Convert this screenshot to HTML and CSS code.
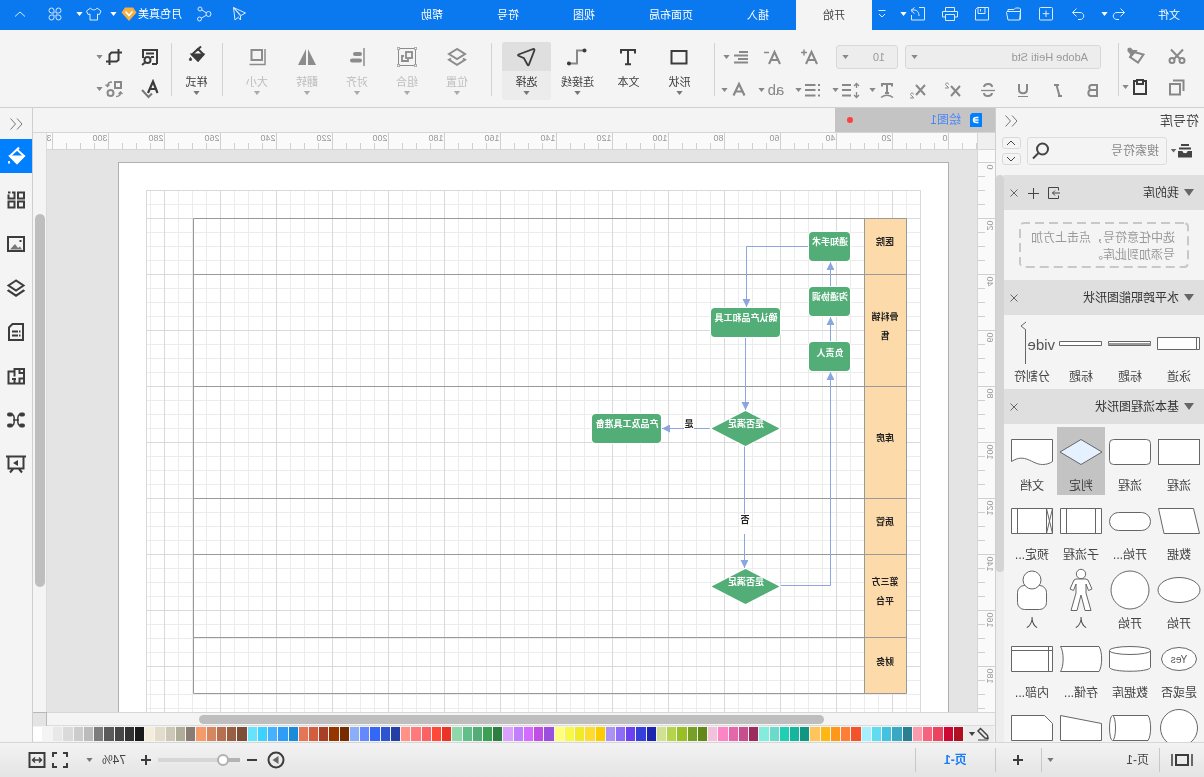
FILE: index.html
```html
<!DOCTYPE html>
<html lang="zh-CN">
<head>
<meta charset="utf-8">
<title>绘图1</title>
<link rel="stylesheet" href="styles.css">
</head>
<body>
<div class="app">
  <header class="topbar">
    <button class="file">文件</button>
    <div class="quick">
      <button class="combo" aria-label="撤销"><svg class="ic" viewBox="0 0 20 20"><path d="M8.500 4.500 4.500 8.500l4 4M4.500 8.500h7.500c5 0 5 7 0 7h-2"/></svg><i class="caret"></i></button>
      <button aria-label="重做"><svg class="ic" viewBox="0 0 20 20"><path d="M11.500 4.500l4 4-4 4M15.500 8.500H8c-5 0-5 7 0 7h2"/></svg></button>
      <button aria-label="新建"><svg class="ic" viewBox="0 0 20 20"><rect x="3.500" y="3.500" width="13" height="12.500" rx="1"/><path d="M10 6.500v6.500M6.700 9.700h6.600"/></svg></button>
      <button aria-label="打开"><svg class="ic" viewBox="0 0 20 20"><path d="M3.500 15.500V5l1-1h4l1.500 1.500h6v2M3.500 7.500h13.500l.500 1-1.500 7.500H4.500z"/></svg></button>
      <button aria-label="保存"><svg class="ic" viewBox="0 0 20 20"><path d="M3.500 3.500h11l2 2v10.500h-13zM7 3.500v6h7v-6M11.500 5v2.500"/></svg></button>
      <button aria-label="打印"><svg class="ic" viewBox="0 0 20 20"><path d="M5.500 7V3.500h9V7M5.500 13h-3V7.500h15V13h-3M5.500 10.500h9v6h-9z"/></svg></button>
      <button class="combo" aria-label="导出"><svg class="ic" viewBox="0 0 20 20"><path d="M9 3.500H3.500v12.500h13V11M17 6.500l-3.500-3M17 6.500l-3.500 3M17 6h-3c-3 0-5 2-5 6"/></svg><i class="caret"></i></button>
    </div>
    <button class="more" aria-label="更多"><svg class="ic12" viewBox="0 0 12 12"><path d="M2.500 2.500h7M3 6l3 3 3-3"/></svg></button>
    <nav class="tabs">
      <button class="tab on">开始</button>
      <button class="tab">插入</button>
      <button class="tab wide">页面布局</button>
      <button class="tab">视图</button>
      <button class="tab">符号</button>
      <button class="tab">帮助</button>
    </nav>
    <div class="account">
      <button aria-label="发送"><svg class="ic" viewBox="0 0 20 20"><path d="M15.500 3.500 3.500 9l4.500 2.500zM15.500 3.500 14 16l-3.500-3M15.500 3.500 8.500 12v4l2-2.500"/></svg></button>
      <button aria-label="分享"><svg class="ic" viewBox="0 0 20 20"><circle cx="5.500" cy="10" r="2.500"/><circle cx="14" cy="5" r="2"/><circle cx="14.500" cy="15" r="2"/><path d="M7.700 8.800 12.200 6M7.700 11.300l5 2.800"/></svg></button>
      <button class="user">月色真美<svg class="gem" viewBox="0 0 16 16"><path d="M4 1.500h8l3.500 5L8 15 .500 6.500z" fill="#f6b042"/><path d="M4.500 5.500 8 9.500l3.500-4" fill="none" stroke="#fff" stroke-width="1.500"/></svg><i class="caret"></i></button>
      <button class="combo" aria-label="主题"><svg class="ic" viewBox="0 0 20 20"><path d="M7 4 3 7l1.500 3.500L6.500 10v6h7.500v-6l2 .500L17.500 7l-4-3c-1 2.500-5.500 2.500-6.500 0z"/></svg><i class="caret"></i></button>
      <button aria-label="应用"><svg class="ic" viewBox="0 0 20 20"><path d="M9 9V6.500A2.500 2.500 0 1 0 6.500 9zM11 9V6.500A2.500 2.500 0 1 1 13.500 9zM9 11v2.500A2.500 2.500 0 1 1 6.500 11zM11 11v2.500a2.500 2.500 0 1 0 2.500-2.500z"/></svg></button>
      <button aria-label="收起"><svg class="ic" viewBox="0 0 20 20"><path d="M5 12.500 10 8l5 4.500"/></svg></button>
    </div>
  </header>

  <section class="ribbon">
    <div class="grp clip">
      <div class="row r21">
        <button aria-label="剪切"><svg class="ic g2" viewBox="0 0 20 20"><path d="M4 3.500l9 9.500M16 3.500 7 13"/><circle cx="5" cy="14.500" r="2.500"/><circle cx="15" cy="14.500" r="2.500"/></svg></button>
        <button aria-label="格式刷"><svg class="ic g2" viewBox="0 0 20 20"><path d="M2.500 8.500 8 16.500l8-5.500L12 6z"/><path d="M9 4.500 15 11l1-4 2-1.500V2.500L15.500 2 13 4.500z" fill="currentColor" stroke-width="1"/></svg></button>
      </div>
      <div class="row r17">
        <button aria-label="复制"><svg class="ic g2" viewBox="0 0 20 20"><rect x="7" y="7" width="10" height="10.500"/><path d="M3.500 14V3.500H14"/></svg></button>
        <button class="combo dark" aria-label="粘贴"><svg class="ic g2" viewBox="0 0 20 20"><path d="M7 4H4v13h12V4h-3"/><rect x="7" y="3" width="6" height="4"/></svg><i class="caret"></i></button>
      </div>
    </div>
    <i class="sep"></i>
    <div class="grp font">
      <div class="row">
        <label class="pick name"><select aria-label="字体"><option>Adobe Heiti Std</option></select><i class="caret"></i></label>
        <label class="pick size"><select aria-label="字号"><option>10</option></select><i class="caret"></i></label>
        <button class="ml16" aria-label="增大字号"><svg class="ic g2" viewBox="0 0 20 20"><path d="M3 17 8.500 5 14 17M5 13h7"/><path d="M13 5.500h6M16 2.500v6" stroke-width="1.500"/></svg></button>
        <button class="ml17" aria-label="减小字号"><svg class="ic g2" viewBox="0 0 20 20"><path d="M3 17 8.500 5 14 17M5 13h7"/><path d="M14 5.500h5" stroke-width="1.500"/></svg></button>
        <button class="combo ml12" aria-label="对齐"><svg class="ic g2" viewBox="0 0 20 20"><path d="M3 5h9M3 8.500h14M3 12h10M3 15.500h14"/></svg><i class="caret"></i></button>
      </div>
      <div class="row fmt">
        <button aria-label="粗体"><svg class="ic g2" viewBox="0 0 20 20"><path d="M6 5h5.500c3 0 3 5 0 5H6h6c3.500 0 3.500 6 0 6H6z"/></svg></button>
        <button aria-label="斜体"><svg class="ic g2" viewBox="0 0 20 20"><path d="M9 5h5M6 16h4M11.500 5 8.500 16"/></svg></button>
        <button aria-label="下划线"><svg class="ic g2" viewBox="0 0 20 20"><path d="M6 4v5.500c0 5 8 5 8 0V4"/><path d="M5 16.500h10" stroke-width="1"/></svg></button>
        <button aria-label="删除线"><svg class="ic g2" viewBox="0 0 20 20"><path d="M14 7c-.500-4-8-4-8 0M6 13c.500 4 8 4 8 0"/><path d="M3 10.500h14" stroke-width="1.300"/></svg></button>
        <button class="script" aria-label="上标"><svg class="ic g2" viewBox="0 0 20 20"><path d="M3 6l9 10M12 6 3 16"/><path d="M14.500 4.500c0-2 3-2 3 0 0 1-3 2-3 3.500h3.500" stroke-width="1"/></svg></button>
        <button class="script" aria-label="下标"><svg class="ic g2" viewBox="0 0 20 20"><path d="M3 5l9 10M12 5 3 15"/><path d="M14.500 14.500c0-2 3-2 3 0 0 1-3 2-3 3.500h3.500" stroke-width="1"/></svg></button>
        <div class="menus">
          <button class="combo" aria-label="文字方向"><svg class="ic g2" viewBox="0 0 20 20"><path d="M5 6.500V4h10v2.500M10 4v9M8 13h4"/><path d="M4 17.500c4-3 8-3 12 0" stroke-width="1.500"/></svg><i class="caret"></i></button>
          <button class="combo" aria-label="行距"><svg class="ic g2" viewBox="0 0 20 20"><path d="M9 5h9M9 10h9M9 15.500h9"/><path d="M3.500 4v4M1 6l2.500-2.500L6 6M3.500 12v5M1 15l2.500 2.500L6 15" stroke-width="1.300"/></svg><i class="caret"></i></button>
          <button class="combo" aria-label="项目符号"><svg class="ic g2" viewBox="0 0 20 20"><path d="M7.500 5H18M7.500 10H18M7.500 15.500H18M3 5h2M3 10h2M3 15.500h2"/></svg><i class="caret"></i></button>
          <button class="combo" aria-label="大小写"><span class="ab">ab</span><i class="caret"></i></button>
          <button class="combo" aria-label="字体颜色"><svg class="ic g2" viewBox="0 0 20 20"><path d="M4.500 15.500 10 4l5.500 11.500M6.500 11.500h7" stroke-width="2.200"/></svg><i class="caret"></i></button>
        </div>
      </div>
    </div>
    <i class="sep"></i>
    <div class="tools main">
      <button class="tool"><span class="pic"><svg class="ic g2" viewBox="0 0 20 20"><rect x="2.500" y="4" width="15" height="12.500"/></svg></span>形状<i class="caret"></i></button>
      <button class="tool"><span class="pic"><svg class="ic g2" viewBox="0 0 20 20"><path d="M3 6.500V3h14v3.500M10 3v14M7 17.200h6"/></svg></span>文本</button>
      <button class="tool"><span class="pic"><svg class="ic g2" viewBox="0 0 20 20"><path d="M3 3.500h7v13h6" stroke="#888"/><circle cx="2.500" cy="3.500" r="1.300" fill="currentColor" stroke-width="1.500"/><circle cx="18" cy="16.500" r="1.300" fill="currentColor" stroke-width="1.500"/></svg></span>连接线<i class="caret"></i></button>
      <button class="tool on"><span class="pic"><svg class="ic g2" viewBox="0 0 20 20"><path d="M1.500 3c0-.500.500-1 1-1l15 5.500c.700.400.700.800 0 1.300l-5.500 2.500-3.500 6.500c-.500.800-1 .600-1.300 0z" stroke-width="1.800"/></svg></span>选择<i class="caret"></i></button>
    </div>
    <i class="sep"></i>
    <div class="tools off">
      <button class="tool" disabled><span class="pic"><svg class="ic g2" viewBox="0 0 20 20"><path d="M10 2l8 5-8 5-8-5z"/><path d="M4 11.500l-2 1.300 8 5 8-5-2-1.300"/></svg></span>位置<i class="caret"></i></button>
      <button class="tool" disabled><span class="pic"><svg class="ic" viewBox="0 0 20 20"><rect x="1.500" y="1.500" width="17" height="17"/><circle cx="1.500" cy="1.500" r="1.300" fill="#f4f4f4"/><circle cx="18.500" cy="1.500" r="1.300" fill="#f4f4f4"/><circle cx="1.500" cy="18.500" r="1.300" fill="#f4f4f4"/><circle cx="18.500" cy="18.500" r="1.300" fill="#f4f4f4"/><rect x="5" y="5" width="6" height="6" stroke-width="1.800"/><path d="M13 9h2v5H9v-2" stroke-width="1.800"/></svg></span>组合<i class="caret"></i></button>
      <button class="tool" disabled><span class="pic"><svg class="ic g2" viewBox="0 0 20 20"><path d="M3 1v18" stroke-width="1.500"/><path d="M7 7h5M7 13.500h8" stroke-width="4" stroke-linecap="round"/></svg></span>对齐<i class="caret"></i></button>
      <button class="tool" disabled><span class="pic"><svg class="ic fill" viewBox="0 0 20 20"><path d="M9 2v16H1zM11 2v16h8z"/></svg></span>翻转<i class="caret"></i></button>
      <button class="tool" disabled><span class="pic"><svg class="ic g2" viewBox="0 0 20 20"><rect x="5" y="3" width="10.500" height="10"/><path d="M2 2v15.500h15.500" stroke-width="1.500"/></svg></span>大小<i class="caret"></i></button>
    </div>
    <i class="sep"></i>
    <div class="tools style">
      <button class="tool"><span class="pic up"><svg class="ic g2" viewBox="0 0 20 20"><path d="M8 5l6 5.500-6 6-5.500-6z"/><path d="M3 10.500h11l-6 6z" fill="currentColor"/><path d="M5 2.500 9.500 6.500"/><path d="M15.500 13.500c1.500 2 1.500 3 0 3s-1.500-1 0-3z" fill="currentColor" stroke-width="1"/></svg></span>样式<i class="caret"></i></button>
    </div>
    <i class="sep"></i>
    <div class="grp edit">
      <div class="row r16 dark">
        <button aria-label="查找"><svg class="ic g2" viewBox="0 0 20 20"><path d="M3 17V3h14v8M6 6.500h8M6 10h3M3 17h5"/><circle cx="12.500" cy="13" r="3"/><path d="M15 15.500l3 2.500"/></svg></button>
        <button class="combo" aria-label="裁剪"><svg class="ic g2" viewBox="0 0 20 20"><path d="M5.500 2v3M2 5.500h10.500l2 2V18M5.500 5.500V13l2 1.500H18"/></svg><i class="caret"></i></button>
      </div>
      <div class="row r16 dark">
        <button aria-label="拼写检查"><svg class="ic g2" viewBox="0 0 20 20"><path d="M2.500 14 7 2.500 12 14M4 10h6" stroke-width="2.200"/><path d="M8 14.500l3.500 3.500 6.500-7" stroke="#777"/></svg></button>
        <button class="combo grey" aria-label="替换"><svg class="ic g2" viewBox="0 0 20 20"><rect x="3" y="3" width="6" height="6"/><circle cx="13.500" cy="14" r="3"/><path d="M12 3c3 0 4.500 1 4.500 4M14.500 5.500l2 2 2-2M8 17.500c-3 0-4.500-1-4.500-4M1.500 15l2-2 2 2" stroke-width="1.300"/></svg><i class="caret"></i></button>
      </div>
    </div>
  </section>

  <main class="work">
    <aside class="library">
      <div class="lib-title"><span>符号库</span><button aria-label="折叠"><svg class="ic" viewBox="0 0 20 20"><path d="M9 4.500 4 10l5 5.500M15.500 4.500 10.500 10l5 5.500"/></svg></button></div>
      <div class="lib-search">
        <button class="combo" aria-label="符号库菜单"><svg class="box" viewBox="0 0 14 14"><path d="M3 0h8v2H3zM1 3.500h12v2H1zM0 7h4.500c0 3 5 3 5 0H14v6.500H0z" fill="currentColor"/></svg><i class="caret"></i></button>
        <div class="search"><input type="text" placeholder="搜索符号" aria-label="搜索符号"><svg class="ic g2" viewBox="0 0 20 20"><circle cx="8.500" cy="8" r="5.500"/><path d="M12.500 12l5.500 5.500"/></svg></div>
        <div class="steps">
          <button aria-label="上一个"><svg class="ic12" viewBox="0 0 12 12"><path d="M2 8l4-4 4 4"/></svg></button>
          <button aria-label="下一个"><svg class="ic12" viewBox="0 0 12 12"><path d="M2 4l4 4 4-4"/></svg></button>
        </div>
      </div>
      <div class="lib-main">
        <div class="lib-list">
          <div class="head"><i class="tri"></i><h2>我的库</h2>
            <button aria-label="导入"><svg class="ic12" viewBox="0 0 12 12"><path d="M1.500 3.500V.500h10v11h-10V8.500M0 6h7.500M5 3.500 7.500 6 5 8.500"/></svg></button>
            <button aria-label="添加"><svg class="ic12" viewBox="0 0 12 12"><path d="M6.500 1v11M1 6.500h11"/></svg></button>
            <button aria-label="关闭"><svg class="ic12 x" viewBox="0 0 12 12"><path d="M2.500 2.500l7 7M9.500 2.500l-7 7"/></svg></button></div>
          <div class="hint"><svg class="dash"><rect x="1" y="1" rx="4"/></svg><p>选中任意符号，点击上方加号添加到此库。</p></div>
          <div class="head"><i class="tri"></i><h2>水平跨职能图形状</h2><button aria-label="关闭"><svg class="ic12 x" viewBox="0 0 12 12"><path d="M2.500 2.500l7 7M9.500 2.500l-7 7"/></svg></button></div>
          <div class="shapes">
            <button class="shape"><svg viewBox="0 0 44 44"><path d="M1.500 16.500h42v12h-42zM4.500 16.500v12"/></svg>泳道</button>
            <button class="shape"><svg viewBox="0 0 44 44"><path d="M1.500 20.500h42v4h-42z"/><path d="M1.500 23h42" stroke-width="2" stroke="#999"/></svg>标题</button>
            <button class="shape"><svg viewBox="0 0 44 44"><path d="M1.500 20.500h42v4h-42z"/></svg>标题</button>
            <button class="shape"><svg viewBox="0 0 44 44"><text x="-1" y="29" class="vide">vide</text><path d="M28.500 9v34M28 1l5 4-5 4" fill="none"/></svg>分割符</button>
          </div>
          <div class="head"><i class="tri"></i><h2>基本流程图形状</h2><button aria-label="关闭"><svg class="ic12 x" viewBox="0 0 12 12"><path d="M2.500 2.500l7 7M9.500 2.500l-7 7"/></svg></button></div>
          <div class="shapes">
            <button class="shape"><svg viewBox="0 0 44 44"><rect x="1.500" y="9.500" width="41" height="25"/></svg>流程</button>
            <button class="shape"><svg viewBox="0 0 44 44"><rect x="1.500" y="9.500" width="41" height="25" rx="4"/></svg>流程</button>
            <button class="shape on"><svg viewBox="0 0 44 44"><path d="M22 9.500 43 22 22 34.500 1 22z" fill="#e5f1ff"/></svg>判定</button>
            <button class="shape"><svg viewBox="0 0 44 44"><path d="M1.500 9.500h41v22c-14-9-20 3-31 3-4 0-7-1-10-3z"/></svg>文档</button>

            <button class="shape"><svg viewBox="0 0 44 44"><path d="M7.500 9.500h35L37 34.500H1.500z"/></svg>数据</button>
            <button class="shape"><svg viewBox="0 0 44 44"><rect x="1.500" y="13.500" width="41" height="18" rx="9"/></svg>开始...</button>
            <button class="shape"><svg viewBox="0 0 44 44"><path d="M1.500 9.500h41v25h-41zM7.500 9.500v25M36.500 9.500v25"/></svg>子流程</button>
            <button class="shape"><svg viewBox="0 0 44 44"><path d="M1.500 9.500h41v25h-41zM7.500 9.500v25M36.500 9.500v25M1.500 9.500l6 25M7.500 9.500l-6 25"/></svg>预定...</button>

            <button class="shape"><svg viewBox="0 0 44 44"><ellipse cx="22" cy="22" rx="21" ry="12.500"/></svg>开始</button>
            <button class="shape"><svg viewBox="0 0 44 44"><circle cx="22" cy="22" r="19"/></svg>开始</button>
            <button class="shape"><svg viewBox="0 0 44 44"><circle cx="22" cy="6" r="4.700"/><path d="M17 11h10l2 1 4 9-3.500 1.500L27 16v9l5 17.500h-6L22 27l-4 15.500h-6L17 25v-9l-2.500 6.500L11 21l4-9z"/></svg>人</button>
            <button class="shape"><svg viewBox="0 0 44 44"><rect x="7.500" y="17.500" width="29" height="24" rx="7"/><circle cx="22" cy="12" r="9"/></svg>人</button>

            <button class="shape"><svg viewBox="0 0 44 44"><ellipse cx="22" cy="22" rx="17.500" ry="11.500"/><text x="22" y="26" class="yes">Yes</text></svg>是或否</button>
            <button class="shape"><svg viewBox="0 0 44 44"><path d="M1.500 13.500v17c2 5 39 5 41 0v-17"/><ellipse cx="22" cy="13.500" rx="20.500" ry="4"/></svg>数据库</button>
            <button class="shape"><svg viewBox="0 0 44 44"><path d="M4 9.500h38.500c-3.500 5-3.500 20 0 25H4c-3.500-5-3.500-20 0-25z"/></svg>存储...</button>
            <button class="shape"><svg viewBox="0 0 44 44"><path d="M1.500 9.500h41v25h-41zM5.500 9.500v25M1.500 13.500h41"/></svg>内部...</button>

            <button class="shape" aria-label="连接"><svg viewBox="0 0 44 44"><circle cx="22" cy="22" r="18.500"/></svg></button>
            <button class="shape" aria-label="直接数据"><svg viewBox="0 0 44 44"><path d="M39 9.500H4c-3.500 5-3.500 20 0 25h35"/><ellipse cx="39.500" cy="22" rx="3" ry="12.500"/></svg></button>
            <button class="shape" aria-label="手动输入"><svg viewBox="0 0 44 44"><path d="M1.500 17.500l41-8v25h-41z"/></svg></button>
            <button class="shape" aria-label="卡片"><svg viewBox="0 0 44 44"><path d="M9.500 9.500h33v25h-41v-17z"/></svg></button>
          </div>
        </div>
        <div class="lib-scroll"><i></i></div>
      </div>
    </aside>

    <section class="center">
      <div class="doc-tabs"><button class="doc"><svg class="doc-ic" viewBox="0 0 12 14"><path d="M0 0h10l2 2v12H0z" fill="#007fff"/><path d="M3.500 4.500h2c4 0 4 5 0 5h-2M3.500 7h4" fill="none" stroke="#fff" stroke-width="1.500"/></svg><span>绘图1</span><i class="dot"></i></button></div>
      <div class="board">
        <div class="corner"></div>
        <svg class="ruler-h" id="rulerH"></svg>
        <div class="vcap"></div>
        <svg class="ruler-v" id="rulerV"></svg>
        <svg class="canvas">
          <defs>
            <pattern id="minor" x="28" y="12" width="14" height="14" patternUnits="userSpaceOnUse"><path d="M.500 0v14M0 .500h14" stroke="#ececec"/></pattern>
            <pattern id="major" x="28" y="12" width="56" height="56" patternUnits="userSpaceOnUse"><path d="M.500 0v56M0 .500h56" stroke="#d9d9d9"/></pattern>
            <marker id="tip" viewBox="0 0 8 8" refX="8" refY="4" markerWidth="8" markerHeight="8" orient="auto"><path d="M0 0l8 4-8 4z" fill="#8aa5e0"/></marker>
          </defs>
          <rect x="28.500" y="12.500" width="830" height="1200" fill="#fff" stroke="#b0b0b0"/>
          <rect x="56" y="40" width="774" height="1100" fill="url(#minor)"/>
          <rect x="56" y="40" width="774" height="1100" fill="url(#major)"/>
          <rect x="56.500" y="40.500" width="774" height="1100" fill="none" stroke="#d9d9d9"/>
          <rect x="70.500" y="68.500" width="42" height="475" fill="#fcdaaa"/>
          <path class="lane" d="M70.500 68.500h713v475h-713zM112.500 68.500v475M70.500 124.500h713M70.500 236.500h713M70.500 348.500h713M70.500 404.500h713M70.500 487.500h713"/>
          <g class="lane-text">
            <text x="92" y="95">医院</text><text x="92" y="170">骨科销</text><text x="92" y="189">售</text>
            <text x="92" y="291">库房</text><text x="92" y="375">质管</text>
            <text x="92" y="435">第三方</text><text x="92" y="454">平台</text><text x="92" y="515">财务</text>
          </g>
          <g class="edge">
            <path d="M146.500 137v-25"/><path d="M146.500 192v-25"/><path d="M196 435.500h-49.500V222"/>
            <path d="M168 96.500h62.500V157"/><path d="M231.500 187v73"/><path d="M267 278.500h48"/><path d="M232.500 296v122"/>
          </g>
          <rect x="283" y="268" width="10" height="12" fill="#fff"/><rect x="227" y="364" width="10" height="20" fill="#fff"/>
          <g class="edge-text"><text x="288" y="277">是</text><text x="232" y="373">否</text></g>
          <g class="node">
            <rect x="127" y="82" width="41" height="29" rx="4"/><rect x="127" y="137" width="41" height="29" rx="4"/><rect x="127" y="192" width="41" height="29" rx="4"/>
            <rect x="197" y="158" width="69" height="29" rx="4"/><rect x="316" y="264" width="69" height="29" rx="4"/>
            <path d="M231.500 261l34 17.500-34 17.500-34-17.500zM231.500 419l34 17.500-34 17.500-34-17.500z"/>
          </g>
          <g class="node-text">
            <text x="147" y="95">通知手术</text><text x="147" y="150">沟通协调</text><text x="147" y="206">负责人</text>
            <text x="231" y="171">确认产品和工具</text><text x="350" y="277">产品及工具准备</text>
            <text x="231" y="277">是否满足</text><text x="231" y="435">是否满足</text>
          </g>
        </svg>
        <div class="vscroll"><i></i></div>
        <div class="hscroll"><i></i></div>
        <div class="square"></div>
      </div>
      <div class="palette"><button class="pen" aria-label="拾色"><svg class="ic14" viewBox="0 0 14 14"><path d="M2.500 8.500 9.500 1.500l2.500 2.500-7 7-3 .500z" stroke-width="1.500"/><path d="M2 13h10"/></svg><i class="caret"></i></button><div class="swatches" id="swatches"></div></div>
    </section>

    <nav class="side">
      <button class="fold" aria-label="展开"><svg class="ic" viewBox="0 0 20 20"><path d="M9 4.500 4 10l5 5.500M15.500 4.500 10.500 10l5 5.500"/></svg></button>
      <button class="on" aria-label="填充"><svg class="ic g2" viewBox="0 0 20 20"><path d="M9 3.500l7 6.500-7 7-7-7z"/><path d="M3 10.500h12.500l-6.500 6.500z" fill="currentColor"/><path d="M7 1.500l2.500 3"/><path d="M17 15c1 1.500.500 2.500 0 2.500s-1-1 0-2.500z" fill="currentColor" stroke-width="1"/></svg></button>
      <button aria-label="主题"><svg class="ic g2" viewBox="0 0 20 20"><rect x="2" y="2.500" width="6" height="6"/><path d="M14 2.500h-2.500v6h6V4.500M15.500 2.500h2.500"/><rect x="2" y="11.500" width="6" height="6"/><rect x="11.500" y="11.500" width="6" height="6"/></svg></button>
      <button aria-label="图片"><svg class="ic g2" viewBox="0 0 20 20"><rect x="2" y="3" width="16" height="14"/><path d="M4 15.500l2-3 2 1.500 3-4 5 5.500z" fill="#777" stroke="none"/><path d="M4.500 7h2"/></svg></button>
      <button aria-label="图层"><svg class="ic g2" viewBox="0 0 20 20"><path d="M10 2.500l7.500 5-7.500 5-7.500-5z"/><path d="M3.500 12l-1 .700 7.500 5 7.500-5-1-.700"/></svg></button>
      <button aria-label="页面属性"><svg class="ic g2" viewBox="0 0 20 20"><path d="M3 2h10.500l3.500 3.500V18H3zM8 9.500h6M8 13.500h6M5.500 9.500h1.500M5.500 13.500h1.500"/></svg></button>
      <button aria-label="布局"><svg class="ic g2" viewBox="0 0 20 20"><path d="M2 3h9.500v2.500H17.500v12H2zM6.500 3v4H2M11.500 5v5.500M6.500 17.500v-5H2M11.500 17.500V14M10 13h4"/></svg></button>
      <button aria-label="连线"><svg class="ic g2" viewBox="0 0 20 20"><path d="M3 4.500h2M15 4.500h2M3 15.500h2M15 15.500h2" stroke-width="4" stroke-linecap="round"/><path d="M6 4.500c3 0 3 11 0 11M14 4.500c-3 0-3 11 0 11M7 10h6" stroke-width="1.500"/></svg></button>
      <button aria-label="演示"><svg class="ic g2" viewBox="0 0 20 20"><path d="M0 2.500h20M2.500 3v11.500h15V3M7 15l-3 3.500M13 15l3 3.500"/><path d="M8 6l5 3-5 3z" fill="currentColor" stroke="none"/></svg></button>
    </nav>
  </main>

  <footer class="status">
    <button class="view" aria-label="视图"><svg class="frame" viewBox="0 0 22 16"><rect x="5" y="3" width="12" height="10" fill="none" stroke="currentColor" stroke-width="2"/><path d="M1 2v12M21 2v12" stroke="currentColor" stroke-width="1.500"/></svg></button>
    <i class="vline"></i>
    <button class="pages">页-1<i class="caret"></i></button>
    <i class="vline"></i>
    <button class="add" aria-label="新建页"><svg class="ic14 bold" viewBox="0 0 14 14"><path d="M7 2v10M2 7h10"/></svg></button>
    <i class="vline"></i>
    <button class="page">页-1</button>
    <i class="vline"></i>
    <div class="zoom">
      <button aria-label="播放"><svg class="ic g2" viewBox="0 0 20 20"><circle cx="10" cy="10" r="7.500"/><path d="M7.500 6l6 4-6 4z" fill="#666" stroke="none"/></svg></button>
      <button aria-label="缩小"><svg class="ic14 bold" viewBox="0 0 14 14"><path d="M2 7h10"/></svg></button>
      <input type="range" min="0" max="100" value="16" aria-label="缩放">
      <button aria-label="放大"><svg class="ic14 bold" viewBox="0 0 14 14"><path d="M7 2v10M2 7h10"/></svg></button>
      <button class="pct">74%<i class="caret"></i></button>
      <button aria-label="全屏"><svg class="ic g2" viewBox="0 0 20 20"><path d="M3 7V3h4M13 3h4v4M17 13v4h-4M7 17H3v-4"/></svg></button>
      <button aria-label="适应宽度"><svg class="ic g2" viewBox="0 0 20 20"><rect x="2.500" y="3" width="15" height="14"/><path d="M6 10h8M8 7.500 5.500 10 8 12.500M12 7.500l2.500 2.500-2.500 2.500" stroke-width="1.400"/></svg></button>
    </div>
  </footer>
</div>
<script src="script.js"></script>
</body>
</html>
```
FILE: styles.css
```css
* { box-sizing: border-box; }
body {
  margin: 0;
  font: 11px/14px "Liberation Sans", "Noto Sans CJK SC", sans-serif;
  color: #444;
  background: #f4f4f4;
  overflow: hidden;
}
button {
  display: flex;
  align-items: center;
  justify-content: center;
  flex: none;
  margin: 0;
  padding: 0;
  border: 0;
  background: none;
  color: inherit;
  font: inherit;
  white-space: nowrap;
}
/* The whole window is shown mirrored */
.app {
  display: flex;
  flex-direction: column;
  height: 100vh;
  transform: scaleX(-1);
}
.ic, .ic12, .ic14 { flex: none; fill: none; stroke: currentColor; stroke-width: 1; }
.ic { width: 20px; height: 20px; }
.ic12 { width: 12px; height: 12px; }
.ic14 { width: 14px; height: 14px; }
.g2, .bold { stroke-width: 2; }
.fill { fill: currentColor; stroke: none; }
.caret {
  flex: none;
  width: 9px;
  height: 4px;
  background: currentColor;
  clip-path: polygon(15% 0, 85% 0, 50% 100%);
}

/* Top bar */
.topbar {
  display: flex;
  align-items: stretch;
  flex: none;
  height: 30px;
  background: #0a78ee;
  color: #fff;
}
.topbar .ic, .topbar .ic12 { color: #dcebfc; }
.file { margin: 0 29px 0 24px; }
.quick { display: flex; gap: 12px; padding-bottom: 2px; }
.more { margin: 0 4px 2px 11px; }
.tabs { display: flex; }
.tab { width: 76px; }
.tab.wide { width: 98px; }
.tab.on { background: #f4f4f4; color: #444; }
.account { display: flex; align-items: center; margin-left: auto; padding: 0 10px 2px 0; }
.account > button { margin-left: 15px; }
.account > .user { margin-left: 12px; }
.account > .user + .combo { margin-left: 5px; }
.account > .combo + button { margin-left: 10px; }
.gem { width: 16px; height: 16px; margin: 0 3px 0 1px; }

/* Ribbon */
.ribbon {
  display: flex;
  flex: none;
  height: 78px;
  padding-top: 11px;
  border-bottom: 1px solid #cfcfcf;
  color: #888;
}
.sep { flex: none; width: 1px; height: 53px; margin-top: 2px; background: #d2d2d2; }
.row { display: flex; align-items: center; height: 32px; }
.clip { width: 85px; padding-left: 17px; }
.r21 { gap: 21px; }
.r17 { gap: 17px; }
.r16 { gap: 16px; }
.clip .r21 { height: 30px; }
.dark { color: #3c3c3c; }
.font { width: 403px; padding-left: 17px; }
.pick {
  display: flex;
  align-items: center;
  height: 24px;
  border: 1px solid #d8d8d8;
  border-radius: 3px;
  background: #ededed;
  color: #999;
}
.pick select {
  flex: 1;
  min-width: 0;
  padding: 0 0 0 12px;
  border: 0;
  background: none;
  appearance: none;
  font: inherit;
  color: inherit;
}
.pick .caret { margin-right: 4px; }
.name { width: 196px; }
.size { width: 62px; margin-left: 7px; }
.ml16 { margin-left: 16px; }
.ml17 { margin-left: 17px; }
.ml12 { margin-left: 12px; }
.fmt { gap: 15px; margin-left: -2px; padding-top: 2px; }
.menus { display: flex; gap: 8px; margin-left: -4px; }
.ab { width: 20px; font-size: 15px; line-height: 20px; }
.tools { display: flex; color: #3c3c3c; }
.tools.main { gap: 2px; padding: 0 10px; }
.tools.off { padding: 0 9px; color: #bdbdbd; }
.tools.style { padding-left: 1px; }
.off .tool { width: 50px; }
.off .ic { color: #8c8c8c; }
.tool {
  flex-direction: column;
  justify-content: flex-start;
  width: 49px;
  height: 58px;
  margin-top: 1px;
  border-radius: 3px;
  overflow: hidden;
}
.tool .caret { margin-top: 2px; color: #777; }
.off .caret { color: #aaa; }
.pic {
  display: flex;
  align-items: center;
  justify-content: center;
  width: 100%;
  height: 29px;
  margin-bottom: 4px;
}
.pic.up { padding-bottom: 6px; }
.tool.on { background: #ececec; }
.tool.on .pic { background: #dfdfdf; }
.edit { padding-left: 11px; }
.grey { color: #888; }
.row .caret { color: #888; }

/* Work area */
.work { display: flex; flex: 1; min-height: 0; }

/* Symbol library */
.library {
  display: flex;
  flex-direction: column;
  flex: none;
  width: 209px;
  border-right: 1px solid #cfcfcf;
}
.lib-title {
  display: flex;
  align-items: center;
  justify-content: space-between;
  height: 25px;
  padding: 0 5px;
  font-size: 13px;
}
.lib-title .ic, .fold .ic { color: #777; }
.lib-search { display: flex; align-items: center; height: 42px; padding: 0 6px 7px 12px; }
.box { width: 14px; height: 14px; color: #444; }
.lib-search > .combo .caret { color: #666; margin-right: 2px; }
.search {
  display: flex;
  align-items: center;
  flex: 1;
  min-width: 0;
  height: 28px;
  padding: 0 3px 0 7px;
  border: 1px solid #dcdcdc;
  border-radius: 3px;
}
.search input {
  flex: 1;
  min-width: 0;
  padding: 0;
  border: 0;
  outline: 0;
  background: none;
  font: inherit;
  font-size: 12px;
}
.search input::placeholder { color: #888; }
.steps { display: flex; flex-direction: column; gap: 4px; margin-left: 6px; }
.steps button { width: 19px; height: 12px; border: 1px solid #d9d9d9; border-radius: 3px; }
.lib-main { display: flex; flex: 1; min-height: 0; }
.lib-list { flex: 1; min-width: 0; overflow: hidden; }
.lib-scroll { width: 8px; background: #ededed; }
.lib-scroll i { display: block; height: 70%; border-radius: 4px; background: #d4d4d4; }
.head {
  display: flex;
  align-items: center;
  gap: 8px;
  height: 35px;
  padding: 0 4px 0 10px;
  background: #dfdfdf;
}
.head h2 { flex: 1; margin: 0 0 0 -3px; font-size: 12px; font-weight: 400; color: #333; }
.head .x { color: #666; }
.tri { width: 10px; height: 7px; background: #666; clip-path: polygon(0 0, 100% 0, 50% 100%); }
.hint { position: relative; height: 46px; margin: 12px 15px; }
.hint p { margin: 0; padding: 8px 0 0 14px; width: 162px; font-size: 12px; line-height: 17px; color: #999; }
.dash { position: absolute; inset: 0; width: 100%; height: 100%; }
.dash rect { width: calc(100% - 2px); height: calc(100% - 2px); fill: none; stroke: #c8c8c8; stroke-width: 2; stroke-dasharray: 9 5; }
.shapes { display: grid; grid-template-columns: repeat(4, 48px); gap: 1px; padding: 3px 0 3px 1px; }
.shape {
  flex-direction: column;
  justify-content: flex-start;
  height: 68px;
  padding-top: 3px;
  font-size: 12px;
  line-height: 18px;
}
.shape svg { width: 44px; height: 44px; margin-bottom: 3px; overflow: visible; fill: #fff; stroke: #666; }
.shape svg text { stroke: none; fill: #555; }
.shape.on { background: #c3c3c3; }
.vide { font-size: 15px; }
.yes { font-size: 10px; text-anchor: middle; }

/* Drawing area */
.center { display: flex; flex-direction: column; flex: 1; min-width: 0; }
.doc-tabs { flex: none; height: 24px; }
.doc { justify-content: flex-start; width: 160px; height: 24px; padding: 0 12px 0 13px; background: #c4c4c4; color: #4d86f5; font-size: 12px; }
.doc-ic { width: 12px; height: 14px; margin-right: 9px; }
.dot { width: 6px; height: 6px; margin-left: auto; border-radius: 50%; background: #ff4040; }
.board {
  display: grid;
  grid-template-columns: 18px minmax(0, 1fr) 14px;
  grid-template-rows: 17px minmax(0, 1fr) 14px;
  flex: 1;
  min-height: 0;
  border-top: 1px solid #d6d6d6;
}
.corner { background: #efefef; border: solid #d6d6d6; border-width: 0 1px 1px 0; }
.ruler-h, .ruler-v, .canvas { display: block; width: 100%; height: 100%; overflow: hidden; }
.ruler-h, .ruler-v { background: #fafafa; }
.ruler-h { border-bottom: 1px solid #d6d6d6; }
.ruler-v { border-right: 1px solid #d6d6d6; }
.tick { fill: none; stroke: #cfcfcf; }
.ruler-h text, .ruler-v text { font-size: 9px; fill: #999; }
.ruler-v text { text-anchor: end; }
.canvas { background: #e4e4e4; }
.vcap, .vscroll { border-left: 1px solid #dcdcdc; }
.vscroll { padding: 64px 2px 0 1px; }
.vscroll i { display: block; height: 75%; max-height: 373px; border-radius: 5px; background: #bebebe; }
.hscroll { grid-column: 1 / 3; padding: 2px 16% 0 18%; border-top: 1px solid #d6d6d6; border-bottom: 1px solid #dcdcdc; }
.hscroll i { display: block; height: 9px; border-radius: 5px; background: #bebebe; }
.square { background: #e4e4e4; border: 1px solid #b8b8b8; border-width: 1px 0 0 1px; }
.lane { fill: none; stroke: #999; }
.lane-text text, .edge-text text, .node-text text { font-size: 9px; font-weight: 700; text-anchor: middle; fill: #222; }
.node-text text { fill: #fff; }
.edge path { fill: none; stroke: #8aa5e0; marker-end: url(#tip); }
.node { fill: #52ad76; stroke: #fff; stroke-width: 2; paint-order: stroke; }
.palette { display: flex; flex: none; height: 16px; }
.pen { width: 30px; margin: 0 1px; background: #ededed; border-radius: 3px; }
.swatches { display: flex; flex: 1; gap: 1px; padding: 1px 0; }
.swatches i { flex: 1; }

/* Side bar */
.side { flex: none; width: 33px; border-left: 1px solid #cfcfcf; color: #3c3c3c; }
.side button { width: 100%; height: 44px; }
.side .fold { height: 31px; }
.side .on { height: 34px; margin-bottom: 5px; background: #007fff; color: #fff; }

/* Status bar */
.status {
  display: flex;
  align-items: center;
  flex: none;
  height: 35px;
  border-top: 1px solid #d6d6d6;
  background: linear-gradient(#f3f3f3, #e4e4e4);
  font-size: 12px;
}
.vline { width: 1px; height: 24px; background: #c8c8c8; }
.view { width: 44px; color: #3c3c3c; }
.frame { width: 22px; height: 16px; }
.pages { justify-content: space-between; width: 117px; padding: 0 4px 0 10px; }
.add { width: 45px; color: #3c3c3c; }
.page { width: 79px; color: #1a7cf5; font-weight: 700; }
.zoom { display: flex; align-items: center; margin-left: auto; padding-right: 24px; color: #3c3c3c; }
.zoom input {
  width: 82px;
  height: 12px;
  margin: 0 5px 0 2px;
  appearance: none;
  background: linear-gradient(90deg, #b4b4b4 20%, #d6d6d6 20%) center / 100% 4px no-repeat;
}
.zoom input::-webkit-slider-thumb {
  appearance: none;
  width: 12px;
  height: 12px;
  border: 2px solid #b0b0b0;
  border-radius: 50%;
  background: #fff;
}
.zoom button { margin-right: 3px; }
.zoom button:first-child { margin-right: 7px; }
.zoom input + button { margin-right: 13px; }
.zoom .pct { margin-right: 15px; }
.pct .caret { margin-left: 8px; }
.pct, .pages { color: #444; }
.pct .caret, .pages .caret { color: #777; }
```
FILE: script.js
```js
const NS = 'http://www.w3.org/2000/svg';
const STEP = 14;

function add(parent, name, attrs, text) {
  const el = document.createElementNS(NS, name);
  for (const key in attrs) el.setAttribute(key, attrs[key]);
  if (text !== undefined) el.textContent = text;
  parent.appendChild(el);
}

// One tick per 5 units, one label per 20 units
function drawRulers() {
  const h = document.getElementById('rulerH');
  const v = document.getElementById('rulerV');
  const width = h.getBoundingClientRect().width;
  const height = v.getBoundingClientRect().height;
  for (let i = -2; 28 + i * STEP < width; i++) {
    const major = i >= 0 && i % 4 === 0;
    const x = 28.5 + i * STEP;
    add(h, 'path', { class: 'tick', d: `M${x} ${major ? 0 : 10}V17` });
    if (major) add(h, 'text', { x: x + 1, y: 8 }, i * 5);
  }
  for (let i = 0; 12 + i * STEP < height; i++) {
    const major = i % 4 === 0;
    const y = 12.5 + i * STEP;
    add(v, 'path', { class: 'tick', d: `M${major ? 0 : 10} ${y}H17` });
    if (major) add(v, 'text', { transform: `translate(8 ${y + 2}) rotate(-90)` }, i * 5);
  }
}

const COLORS = `b01121 cd0833 ea4460 f5637f fa9aac 2a7f90 3aa8c3 43c2e0 61dbf2 a6efff
f4522a ff7e35 ff9719 ffb716 ffc55c 139681 16b59e 1fceb3 6bdacb 84ecdc
9c2c5f c84f8d e467a9 fb85c5 f2c2dd 628918 76a026 98bf24 b5d34b d2e092
1d26ae 3440d9 6b42f2 8f6cf7 ab92f7 fccb00 fddc2e f1ea27 f9f74a ffff7b
9b4fde c24de4 d46aff c17fff dba1ff 2e7e42 3b9f54 52ae76 62bf89 8fd8ab
ea3425 ff4a38 fb6264 ff7b7b ff9186 2440a4 2c55cf 3467f5 6489ff 8aaef8
752c00 963500 a94026 d35e3f e37656 1a8bdb 2f9df6 46b1ff 3dd1ff 66e3ff
7b4e35 976045 b67050 d68760 f59a6b 887c75 b1ab9a cdc8b6 e4dccb f4edd9
1a1a1a 323232 464646 5a5a5a 7d7d7d bbbbbb cccccc dadada e8e8e8 f4f4f4 ffffff`.split(/\s+/);

function drawPalette() {
  const box = document.getElementById('swatches');
  for (const color of COLORS) {
    const swatch = document.createElement('i');
    swatch.style.background = '#' + color;
    box.appendChild(swatch);
  }
}

drawRulers();
drawPalette();
```
